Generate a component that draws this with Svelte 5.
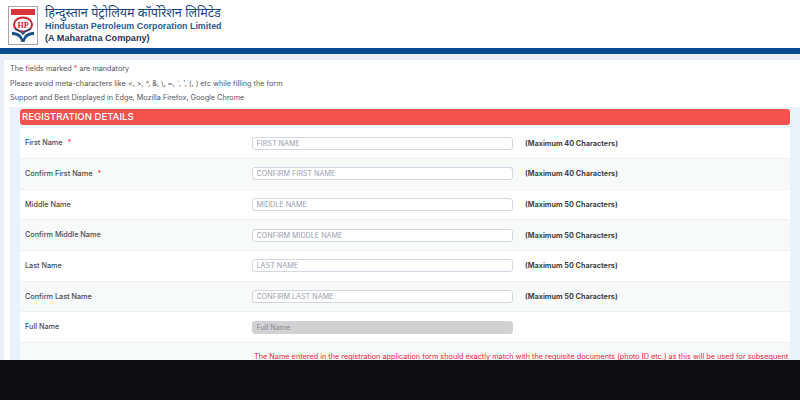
<script>
  const rows = [
    { label: 'First Name', req: true, ph: 'FIRST NAME', hint: '(Maximum 40 Characters)' },
    { label: 'Confirm First Name', req: true, ph: 'CONFIRM FIRST NAME', hint: '(Maximum 40 Characters)' },
    { label: 'Middle Name', ph: 'MIDDLE NAME', hint: '(Maximum 50 Characters)' },
    { label: 'Confirm Middle Name', ph: 'CONFIRM MIDDLE NAME', hint: '(Maximum 50 Characters)' },
    { label: 'Last Name', ph: 'LAST NAME', hint: '(Maximum 50 Characters)' },
    { label: 'Confirm Last Name', ph: 'CONFIRM LAST NAME', hint: '(Maximum 50 Characters)' },
    { label: 'Full Name', ph: 'Full Name', disabled: true }
  ];
</script>

<div class="screen">
  <div class="page">
    <header class="top">
      <svg class="logo" width="30" height="39" viewBox="0 0 30 39">
        <rect x="0.5" y="0.5" width="29" height="38" fill="#fff" stroke="#a5a5ab" />
        <rect x="3" y="3" width="24" height="6" fill="#d9343a" />
        <ellipse cx="15" cy="18.500" rx="9" ry="7" fill="#fff" stroke="#d9232e" stroke-width="2" />
        <text x="15" y="21.500" class="hp">HP</text>
        <path d="M4 26c6 0 9 2 11 7c2-5 5-7 11-7v3c-5 0-8 2-9.500 7h-3C12 31 9 29 4 29z" fill="#1b4f8c" />
        <path d="M7 23c4 1 6 2 8 5c2-3 4-4 8-5" fill="none" stroke="#1b4f8c" stroke-width="1.500" />
      </svg>
      <div class="brand">
        <div class="hindi">हिन्दुस्तान पेट्रोलियम कॉर्पोरेशन लिमिटेड</div>
        <div class="english">Hindustan Petroleum Corporation Limited</div>
        <div class="maharatna">(A Maharatna Company)</div>
      </div>
    </header>
    <div class="bluebar"></div>

    <main class="sheet">
      <div class="notes">
        <p>The fields marked <span class="star">*</span> are mandatory</p>
        <p>Please avoid meta-characters like &lt;, &gt;, ^, &amp;, \, ~, `, ', (, ) etc while filling the form</p>
        <p>Support and Best Displayed in Edge, Mozilla Firefox, Google Chrome</p>
      </div>

      <section class="panel">
        <h2>REGISTRATION DETAILS</h2>
        <div class="rows">
          {#each rows as row, i}
            <div class="row" class:alt={i % 2 === 1}>
              <div class="label">{row.label}{#if row.req}<span class="star req">*</span>{/if}</div>
              <input class="field" placeholder={row.ph} disabled={row.disabled} />
              {#if row.hint}<div class="hint">{row.hint}</div>{/if}
            </div>
          {/each}
          <div class="row alt warn">
            <p>The Name entered in the registration application form should exactly match with the requisite documents (photo ID etc.) as this will be used for subsequent</p>
          </div>
        </div>
      </section>
    </main>
  </div>
  <div class="black"></div>
</div>

<style>
  :global(body) {
    margin: 0;
    background: #0d0d0f;
  }
  .screen {
    width: 800px;
    height: 400px;
    overflow: hidden;
    font-family: Inter, "Liberation Sans", sans-serif;
  }
  .page {
    height: 360px;
    overflow: hidden;
    background: #eceef8;
  }
  .black {
    height: 40px;
    background: #0d0d0f;
  }
  .top {
    height: 48px;
    background: #fff;
    display: flex;
    align-items: flex-start;
    padding: 6px 0 0 8px;
    box-sizing: border-box;
    gap: 7px;
  }
  .logo {
    flex: none;
  }
  .hp {
    font: bold 8px "Liberation Serif", serif;
    fill: #d9232e;
    text-anchor: middle;
  }
  .hindi {
    font-family: "Noto Sans", "Liberation Sans", sans-serif;
    font-size: 12.600px;
    line-height: 14px;
    color: #17467f;
    white-space: nowrap;
  }
  .english {
    font: bold 8.900px/10px "Liberation Sans", sans-serif;
    color: #1f5c97;
    margin-top: 1px;
  }
  .maharatna {
    font: bold 9.150px/12px "Liberation Sans", sans-serif;
    color: #17375f;
    margin-top: 1px;
  }
  .bluebar {
    height: 6px;
    background: #0a4a8f;
  }
  .sheet {
    margin: 6px 0 0 4px;
    background: #fff;
    height: 320px;
  }
  .notes {
    padding: 2px 0 0 6px;
    height: 47px;
    box-sizing: border-box;
  }
  .notes p {
    margin: 0;
    font-size: 7.250px;
    line-height: 14.500px;
    color: #55555c;
    white-space: nowrap;
  }
  .star {
    color: #ef4444;
  }
  .req {
    margin-left: 5px;
  }
  .panel {
    margin-left: 6px;
    padding: 2px 10px 0 10px;
    background: #e9f3fb;
    height: 300px;
  }
  h2 {
    margin: 0;
    height: 16px;
    padding-left: 2px;
    background: #f4524f;
    border-radius: 3px;
    color: #fff;
    font-size: 9.600px;
    font-weight: 500;
    line-height: 16px;
  }
  .rows {
    margin-top: 3.300px;
  }
  .row {
    height: 30.700px;
    box-sizing: border-box;
    background: #fff;
    border-bottom: 1px solid #eef0f2;
    display: flex;
    align-items: center;
    padding-left: 5px;
  }
  .row.alt {
    background: #f8fafa;
  }
  .label {
    width: 226.500px;
    flex: none;
    font-size: 7.250px;
    font-weight: 500;
    color: #4a4a52;
    margin-top: -1px;
  }
  .field {
    width: 261px;
    height: 13px;
    flex: none;
    box-sizing: border-box;
    border: 1px solid #d4d7e3;
    border-radius: 3px;
    background: #fff;
    padding: 0 4px;
    font: 7.200px Inter, "Liberation Sans", sans-serif;
    outline: none;
  }
  .field::placeholder {
    color: #9a9eb0;
    opacity: 1;
  }
  .field:disabled {
    background: #d1d1d3;
    border-color: #d1d1d3;
  }
  .field:disabled::placeholder {
    color: #85858c;
  }
  .hint {
    margin-left: 12.500px;
    font-size: 7.250px;
    font-weight: 700;
    color: #3f3f4a;
    white-space: nowrap;
  }
  .warn {
    height: 40px;
    align-items: flex-start;
    padding: 9px 0 0 234px;
    overflow: hidden;
  }
  .warn p {
    margin: 0;
    font-size: 7.300px;
    line-height: 10px;
    color: #f0203a;
    white-space: nowrap;
  }
</style>
